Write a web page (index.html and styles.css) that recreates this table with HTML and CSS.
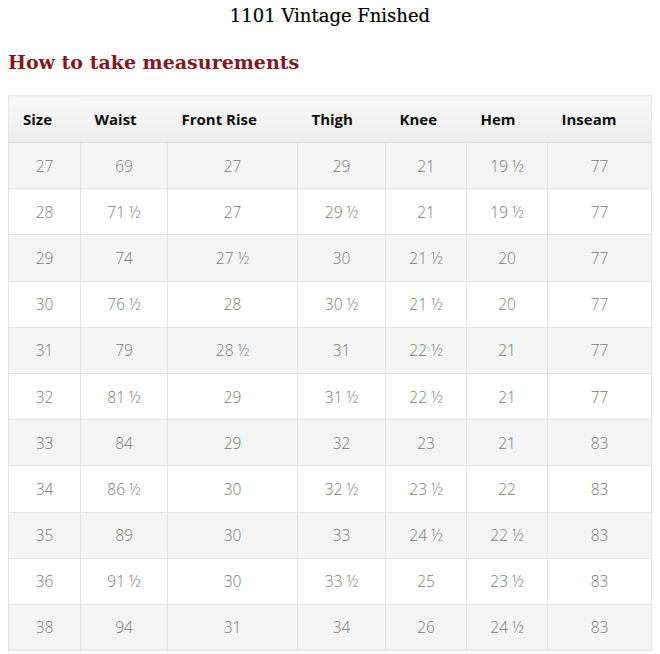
FILE: index.html
```html
<!DOCTYPE html>
<html>
<head>
<meta charset="utf-8">
<link rel="stylesheet" href="styles.css">
</head>
<body>
<h1 class="title">1101 Vintage Fnished</h1>
<h2 class="subtitle">How to take measurements</h2>
<table class="size-table">
<colgroup>
<col class="c1"><col class="c2"><col class="c3"><col class="c4"><col class="c5"><col class="c6"><col class="c7">
</colgroup>
<thead>
<tr><th>Size</th><th>Waist</th><th>Front Rise</th><th>Thigh</th><th>Knee</th><th>Hem</th><th>Inseam</th></tr>
</thead>
<tbody>
<tr><td>27</td><td>69</td><td>27</td><td>29</td><td>21</td><td>19 ½</td><td>77</td></tr>
<tr><td>28</td><td>71 ½</td><td>27</td><td>29 ½</td><td>21</td><td>19 ½</td><td>77</td></tr>
<tr><td>29</td><td>74</td><td>27 ½</td><td>30</td><td>21 ½</td><td>20</td><td>77</td></tr>
<tr><td>30</td><td>76 ½</td><td>28</td><td>30 ½</td><td>21 ½</td><td>20</td><td>77</td></tr>
<tr><td>31</td><td>79</td><td>28 ½</td><td>31</td><td>22 ½</td><td>21</td><td>77</td></tr>
<tr><td>32</td><td>81 ½</td><td>29</td><td>31 ½</td><td>22 ½</td><td>21</td><td>77</td></tr>
<tr><td>33</td><td>84</td><td>29</td><td>32</td><td>23</td><td>21</td><td>83</td></tr>
<tr><td>34</td><td>86 ½</td><td>30</td><td>32 ½</td><td>23 ½</td><td>22</td><td>83</td></tr>
<tr><td>35</td><td>89</td><td>30</td><td>33</td><td>24 ½</td><td>22 ½</td><td>83</td></tr>
<tr><td>36</td><td>91 ½</td><td>30</td><td>33 ½</td><td>25</td><td>23 ½</td><td>83</td></tr>
<tr><td>38</td><td>94</td><td>31</td><td>34</td><td>26</td><td>24 ½</td><td>83</td></tr>
</tbody>
</table>
</body>
</html>
```
FILE: styles.css
```css
html, body { background: #fff; }
body {
  margin: 0 8px;
  font-family: "Open Sans", "Liberation Sans", sans-serif;
}
.title {
  margin: 4px 0 0;
  text-align: center;
  font-family: "DejaVu Serif", "Liberation Serif", serif;
  font-weight: normal;
  font-size: 18px;
  line-height: 24px;
  color: #000;
  -webkit-text-stroke: 0.2px #000;
}
.subtitle {
  margin: 21px 0 0;
  font-family: "DejaVu Serif", "Liberation Serif", serif;
  font-weight: bold;
  font-size: 19px;
  line-height: 26px;
  color: #7d1a1f;
}
.size-table {
  margin-top: 20px;
  width: 643px;
  border-collapse: collapse;
  table-layout: fixed;
}
.c1 { width: 72px; }
.c2 { width: 87px; }
.c3 { width: 130px; }
.c4 { width: 88px; }
.c5 { width: 81px; }
.c6 { width: 81px; }
.c7 { width: 104px; }
.size-table th {
  height: 46px;
  padding: 0 0 0 14px;
  text-align: left;
  font-weight: 700;
  font-size: 15px;
  color: #111;
  background: linear-gradient(#f8f8f8, #ececec);
  border-top: 1px solid #e6e6e6;
  border-bottom: 1px solid #dcdcdc;
}
.size-table th:first-child { border-left: 1px solid #e6e6e6; }
.size-table th:last-child { border-right: 1px solid #e6e6e6; }
.size-table td {
  height: 45.2px;
  padding: 0;
  text-align: center;
  font-weight: 300;
  font-size: 15.5px;
  color: #777;
  border: 1px solid #e3e3e3;
}
.size-table tbody tr:nth-child(odd) td { background: #f4f4f4; }
.size-table tbody tr:nth-child(even) td { background: #fff; }
```
